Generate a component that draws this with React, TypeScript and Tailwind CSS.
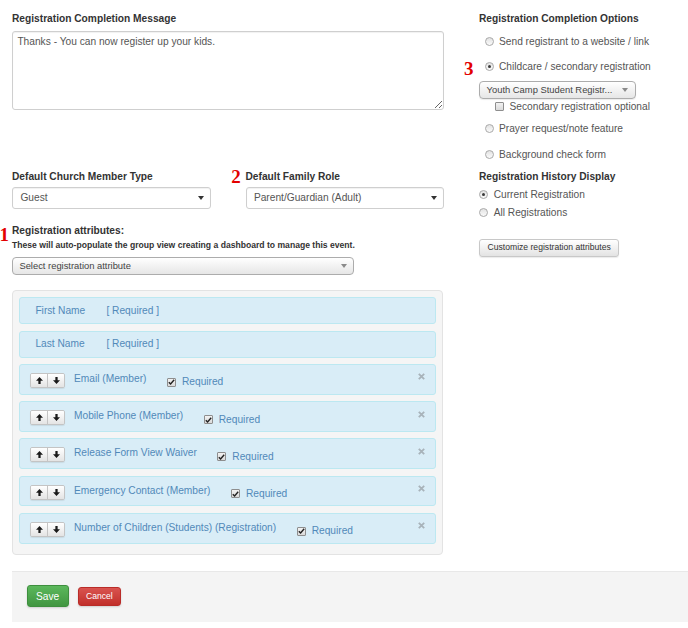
import React from "react";

const attributes = [
  "Email (Member)",
  "Mobile Phone (Member)",
  "Release Form View Waiver",
  "Emergency Contact (Member)",
  "Number of Children (Students) (Registration)",
];

function Caret({ color = "#333" }: { color?: string }) {
  return (
    <svg width="6" height="4" viewBox="0 0 6 4" aria-hidden="true">
      <polygon points="0,0 6,0 3,4" fill={color} />
    </svg>
  );
}

function Radio({ checked = false }: { checked?: boolean }) {
  return (
    <span className="flex h-[9px] w-[9px] shrink-0 items-center justify-center rounded-full border border-[#a9a9a9] bg-linear-to-b from-[#e2e2e2] to-[#fbfbfb]">
      {checked && <span className="h-[3px] w-[3px] rounded-full bg-[#3a3a3a]" />}
    </span>
  );
}

function Checkbox({ checked = false }: { checked?: boolean }) {
  return (
    <span className="flex h-[9px] w-[9px] shrink-0 items-center justify-center rounded-[1px] border border-[#8e8e8e] bg-linear-to-b from-[#f2f2f2] to-[#dadada]">
      {checked && (
        <svg width="7" height="6" viewBox="0 0 7 6" aria-hidden="true">
          <path d="M0.8 3.2 L2.6 5 L6.2 0.8" stroke="#222" strokeWidth="1.4" fill="none" />
        </svg>
      )}
    </span>
  );
}

function Arrow({ down = false }: { down?: boolean }) {
  return (
    <svg
      width="7"
      height="7"
      viewBox="0 0 8 8"
      aria-hidden="true"
      className={down ? "rotate-180" : ""}
    >
      <polygon points="4,0 8,4.2 5.3,4.2 5.3,8 2.7,8 2.7,4.2 0,4.2" fill="#1a1a1a" />
    </svg>
  );
}

function Annotation({ n, className }: { n: string; className: string }) {
  return (
    <span
      className={`absolute font-['Liberation_Serif',serif] text-[19px] font-bold leading-none text-[#e30000] ${className}`}
    >
      {n}
    </span>
  );
}

function FieldLabel({ children }: { children: React.ReactNode }) {
  return <div className="text-[10.2px] font-bold leading-[14px] text-[#333]">{children}</div>;
}

function PlainSelect({ value }: { value: string }) {
  return (
    <div className="mt-[3.5px] flex h-[21.5px] items-center justify-between rounded-[3px] border border-[#cfcfcf] bg-white pl-[7.4px] pr-[6px] text-[10.2px] text-[#555] shadow-[inset_0_1px_1px_rgba(0,0,0,0.06)]">
      <span>{value}</span>
      <Caret />
    </div>
  );
}

function AttributeRow({ label }: { label: string }) {
  return (
    <div className="flex h-[30.8px] items-start rounded-[3px] border border-[#bce8f1] bg-[#d9edf7] pl-[10.4px] pr-[10px] pt-[6px]">
      <div className="mt-[2px] flex h-[15px] overflow-hidden rounded-[2px] border border-[#c4c4c4] shadow-[0_1px_1px_rgba(0,0,0,0.08)]">
        <span className="flex w-[16px] items-center justify-center bg-linear-to-b from-white to-[#e4e4e4]">
          <Arrow />
        </span>
        <span className="flex w-[16.6px] items-center justify-center border-l border-[#c4c4c4] bg-linear-to-b from-white to-[#e4e4e4]">
          <Arrow down />
        </span>
      </div>
      <span className="ml-[9px] mt-[1px] leading-[14px] text-[#5189b9]">{label}</span>
      <span className="ml-[20.5px] mt-[4.4px] flex items-center leading-[14px] text-[#5189b9]">
        <Checkbox checked />
        <span className="ml-[6px]">Required</span>
      </span>
      <span className="ml-auto mt-[2.5px]">
        <svg width="7" height="7" viewBox="0 0 7 7" aria-hidden="true">
          <path d="M0.8 0.8 L6.2 6.2 M6.2 0.8 L0.8 6.2" stroke="#a8b3ba" strokeWidth="1.8" />
        </svg>
      </span>
    </div>
  );
}

function FixedRow({ label }: { label: string }) {
  return (
    <div className="flex h-[27px] items-center rounded-[3px] border border-[#bce8f1] bg-[#d9edf7] pl-[15.4px] text-[#5189b9]">
      <span className="w-[71px]">{label}</span>
      <span>[ Required ]</span>
    </div>
  );
}

export default function App() {
  return (
    <div className="h-[628px] w-[688px] overflow-hidden bg-white font-['Liberation_Sans',Arial,sans-serif] text-[10.2px]">
      <div className="flex pl-3 pt-3">
        {/* left column */}
        <div className="w-[432px]">
          <FieldLabel>Registration Completion Message</FieldLabel>
          <textarea
            readOnly
            defaultValue="Thanks - You can now register up your kids."
            className="mt-[4.5px] block h-[79.5px] w-[431.5px] rounded-[3px] border border-[#cfcfcf] px-[4.4px] py-[3.6px] text-[10.2px] leading-[14px] text-[#555] shadow-[inset_0_1px_1px_rgba(0,0,0,0.06)] outline-none"
          />

          <div className="mt-[59.5px] flex gap-[35px]">
            <div className="w-[198.5px]">
              <FieldLabel>Default Church Member Type</FieldLabel>
              <PlainSelect value="Guest" />
            </div>
            <div className="relative w-[198px]">
              <Annotation n="2" className="-left-[14.3px] -top-[3px]" />
              <FieldLabel>Default Family Role</FieldLabel>
              <PlainSelect value="Parent/Guardian (Adult)" />
            </div>
          </div>

          <div className="relative mt-[15.4px]">
            <Annotation n="1" className="-left-[12.5px] top-[1px]" />
            <div className="text-[10.2px] font-bold leading-[14px] text-[#333]">
              Registration attributes:
            </div>
            <div className="mt-[2.5px] text-[8.6px] font-bold leading-[11px] text-[#333]">
              These will auto-populate the group view creating a dashboard to manage this event.
            </div>
          </div>

          <div className="mt-[5.8px] flex h-[18px] w-[341.7px] items-center justify-between rounded-[4px] border border-[#acacac] bg-linear-to-b from-white to-[#e6e6e6] pl-[6.4px] pr-[6px] text-[9.4px] text-[#444]">
            <span>Select registration attribute</span>
            <Caret color="#8a8a8a" />
          </div>

          <div className="mt-[14.7px] flex w-[431px] flex-col gap-[6.4px] rounded-[4px] border border-[#e3e3e3] bg-[#f5f5f5] pb-[10.5px] pl-[6px] pr-[5.6px] pt-[6.3px]">
            <FixedRow label="First Name" />
            <FixedRow label="Last Name" />
            {attributes.map((a) => (
              <AttributeRow key={a} label={a} />
            ))}
          </div>
        </div>

        {/* right column */}
        <div className="ml-[35px] w-[209px] text-[#555]">
          <FieldLabel>Registration Completion Options</FieldLabel>
          <div className="mt-[8.3px] flex h-[14px] items-center pl-[5.5px]">
            <Radio />
            <span className="ml-[5.5px]">Send registrant to a website / link</span>
          </div>
          <div className="relative mt-[11.4px] flex h-[14px] items-center pl-[5.5px]">
            <Annotation n="3" className="-left-[15px] top-[-1px]" />
            <Radio checked />
            <span className="ml-[5.5px]">Childcare / secondary registration</span>
          </div>
          <div className="mt-[7.6px] flex h-[17.7px] w-[156.7px] items-center justify-between rounded-[4px] border border-[#acacac] bg-linear-to-b from-white to-[#e6e6e6] pl-[6.6px] pr-[7px] text-[9.4px] text-[#444] shadow-[0_1px_1px_rgba(0,0,0,0.08)]">
            <span>Youth Camp Student Registr...</span>
            <Caret color="#8a8a8a" />
          </div>
          <div className="mt-[1px] flex h-[14px] items-center pl-[15.5px]">
            <Checkbox />
            <span className="ml-[6px]">Secondary registration optional</span>
          </div>
          <div className="mt-[7.7px] flex h-[14px] items-center pl-[5.5px]">
            <Radio />
            <span className="ml-[5.5px]">Prayer request/note feature</span>
          </div>
          <div className="mt-[11.6px] flex h-[14px] items-center pl-[5.5px]">
            <Radio />
            <span className="ml-[5.5px]">Background check form</span>
          </div>
          <div className="mt-[8.4px]">
            <FieldLabel>Registration History Display</FieldLabel>
          </div>
          <div className="mt-[3.6px] flex h-[14px] items-center">
            <Radio checked />
            <span className="ml-[5.7px]">Current Registration</span>
          </div>
          <div className="mt-[4.4px] flex h-[14px] items-center">
            <Radio />
            <span className="ml-[5.7px]">All Registrations</span>
          </div>
          <button className="mt-[19px] flex h-[18px] w-[140.3px] items-center justify-center rounded-[3px] border border-[#c8c8c8] bg-linear-to-b from-white to-[#e3e3e3] text-[8.6px] text-[#333] shadow-[0_1px_1px_rgba(0,0,0,0.08)]">
            Customize registration attributes
          </button>
        </div>
      </div>

      {/* footer */}
      <div className="ml-3 mt-[15.7px] flex h-[51px] items-start gap-[9px] border-t border-[#e8e8e8] bg-[#f4f4f4] pl-[14.7px] pt-[13.6px]">
        <button className="flex h-[22px] w-[42px] items-center justify-center rounded-[3px] border border-[#3e8f3e] bg-linear-to-b from-[#5cb85c] to-[#419641] text-[10.2px] text-white shadow-[0_1px_2px_rgba(0,0,0,0.15)]">
          Save
        </button>
        <button className="mt-[1.4px] flex h-[19px] w-[43.3px] items-center justify-center rounded-[3px] border border-[#b92c28] bg-linear-to-b from-[#d9534f] to-[#c12e2a] text-[8.6px] text-white shadow-[0_1px_2px_rgba(0,0,0,0.15)]">
          Cancel
        </button>
      </div>
    </div>
  );
}
